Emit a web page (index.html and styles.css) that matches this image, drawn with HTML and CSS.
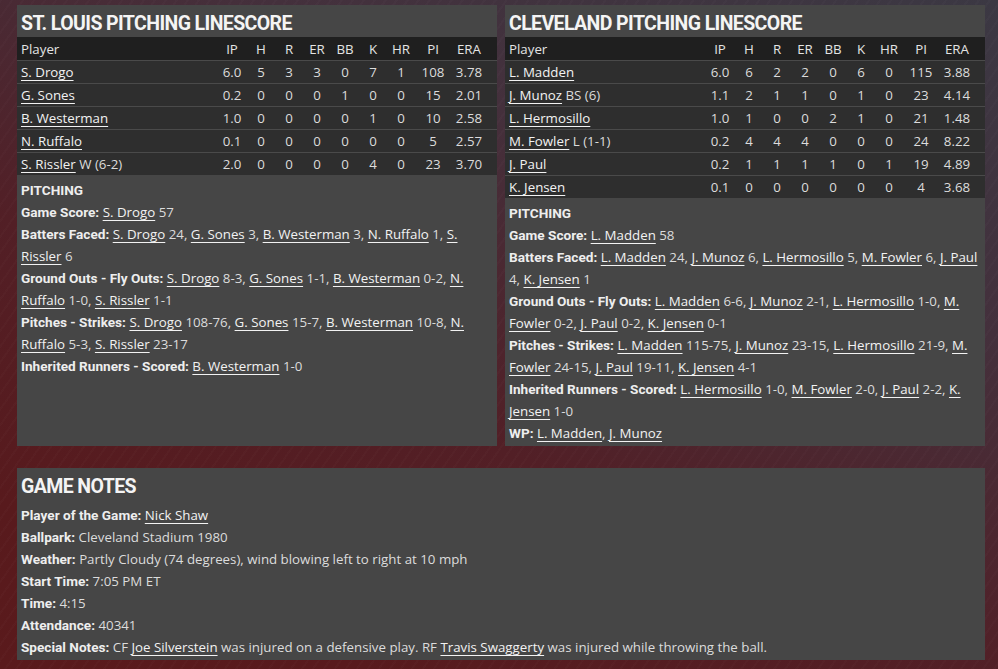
FILE: index.html
```html
<!DOCTYPE html>
<html>
<head>
<meta charset="utf-8">
<link rel="stylesheet" href="styles.css">
</head>
<body>
<div class="page">
  <div class="grid">
    <section class="panel">
      <h2 class="title">ST. LOUIS PITCHING LINESCORE</h2>
      <table class="line">
        <colgroup><col class="c-player"><col class="c-ip"><col class="c-n"><col class="c-n"><col class="c-n"><col class="c-n"><col class="c-n"><col class="c-n"><col class="c-pi"><col class="c-era"></colgroup>
        <thead><tr><th class="pl">Player</th><th>IP</th><th>H</th><th>R</th><th>ER</th><th>BB</th><th>K</th><th>HR</th><th>PI</th><th class="era">ERA</th></tr></thead>
        <tbody>
          <tr><td class="pl"><a>S. Drogo</a></td><td>6.0</td><td>5</td><td>3</td><td>3</td><td>0</td><td>7</td><td>1</td><td>108</td><td class="era">3.78</td></tr>
          <tr><td class="pl"><a>G. Sones</a></td><td>0.2</td><td>0</td><td>0</td><td>0</td><td>1</td><td>0</td><td>0</td><td>15</td><td class="era">2.01</td></tr>
          <tr><td class="pl"><a>B. Westerman</a></td><td>1.0</td><td>0</td><td>0</td><td>0</td><td>0</td><td>1</td><td>0</td><td>10</td><td class="era">2.58</td></tr>
          <tr><td class="pl"><a>N. Ruffalo</a></td><td>0.1</td><td>0</td><td>0</td><td>0</td><td>0</td><td>0</td><td>0</td><td>5</td><td class="era">2.57</td></tr>
          <tr><td class="pl"><a>S. Rissler</a> W (6-2)</td><td>2.0</td><td>0</td><td>0</td><td>0</td><td>0</td><td>4</td><td>0</td><td>23</td><td class="era">3.70</td></tr>
        </tbody>
      </table>
      <div class="notes">
        <div class="sub">PITCHING</div>
        <p><b>Game Score:</b> <a>S. Drogo</a> 57</p>
        <p><b>Batters Faced:</b> <a>S. Drogo</a> 24, <a>G. Sones</a> 3, <a>B. Westerman</a> 3, <a>N. Ruffalo</a> 1, <a>S. Rissler</a> 6</p>
        <p><b>Ground Outs - Fly Outs:</b> <a>S. Drogo</a> 8-3, <a>G. Sones</a> 1-1, <a>B. Westerman</a> 0-2, <a>N. Ruffalo</a> 1-0, <a>S. Rissler</a> 1-1</p>
        <p><b>Pitches - Strikes:</b> <a>S. Drogo</a> 108-76, <a>G. Sones</a> 15-7, <a>B. Westerman</a> 10-8, <a>N. Ruffalo</a> 5-3, <a>S. Rissler</a> 23-17</p>
        <p><b>Inherited Runners - Scored:</b> <a>B. Westerman</a> 1-0</p>
      </div>
    </section>
    <section class="panel">
      <h2 class="title">CLEVELAND PITCHING LINESCORE</h2>
      <table class="line">
        <colgroup><col class="c-player"><col class="c-ip"><col class="c-n"><col class="c-n"><col class="c-n"><col class="c-n"><col class="c-n"><col class="c-n"><col class="c-pi"><col class="c-era"></colgroup>
        <thead><tr><th class="pl">Player</th><th>IP</th><th>H</th><th>R</th><th>ER</th><th>BB</th><th>K</th><th>HR</th><th>PI</th><th class="era">ERA</th></tr></thead>
        <tbody>
          <tr><td class="pl"><a>L. Madden</a></td><td>6.0</td><td>6</td><td>2</td><td>2</td><td>0</td><td>6</td><td>0</td><td>115</td><td class="era">3.88</td></tr>
          <tr><td class="pl"><a>J. Munoz</a> BS (6)</td><td>1.1</td><td>2</td><td>1</td><td>1</td><td>0</td><td>1</td><td>0</td><td>23</td><td class="era">4.14</td></tr>
          <tr><td class="pl"><a>L. Hermosillo</a></td><td>1.0</td><td>1</td><td>0</td><td>0</td><td>2</td><td>1</td><td>0</td><td>21</td><td class="era">1.48</td></tr>
          <tr><td class="pl"><a>M. Fowler</a> L (1-1)</td><td>0.2</td><td>4</td><td>4</td><td>4</td><td>0</td><td>0</td><td>0</td><td>24</td><td class="era">8.22</td></tr>
          <tr><td class="pl"><a>J. Paul</a></td><td>0.2</td><td>1</td><td>1</td><td>1</td><td>1</td><td>0</td><td>1</td><td>19</td><td class="era">4.89</td></tr>
          <tr><td class="pl"><a>K. Jensen</a></td><td>0.1</td><td>0</td><td>0</td><td>0</td><td>0</td><td>0</td><td>0</td><td>4</td><td class="era">3.68</td></tr>
        </tbody>
      </table>
      <div class="notes">
        <div class="sub">PITCHING</div>
        <p><b>Game Score:</b> <a>L. Madden</a> 58</p>
        <p><b>Batters Faced:</b> <a>L. Madden</a> 24, <a>J. Munoz</a> 6, <a>L. Hermosillo</a> 5, <a>M. Fowler</a> 6, <a>J. Paul</a> 4, <a>K. Jensen</a> 1</p>
        <p><b>Ground Outs - Fly Outs:</b> <a>L. Madden</a> 6-6, <a>J. Munoz</a> 2-1, <a>L. Hermosillo</a> 1-0, <a>M. Fowler</a> 0-2, <a>J. Paul</a> 0-2, <a>K. Jensen</a> 0-1</p>
        <p><b>Pitches - Strikes:</b> <a>L. Madden</a> 115-75, <a>J. Munoz</a> 23-15, <a>L. Hermosillo</a> 21-9, <a>M. Fowler</a> 24-15, <a>J. Paul</a> 19-11, <a>K. Jensen</a> 4-1</p>
        <p><b>Inherited Runners - Scored:</b> <a>L. Hermosillo</a> 1-0, <a>M. Fowler</a> 2-0, <a>J. Paul</a> 2-2, <a>K. Jensen</a> 1-0</p>
        <p><b>WP:</b> <a>L. Madden</a>, <a>J. Munoz</a></p>
      </div>
    </section>
  </div>
  <section class="panel gamenotes">
    <h2 class="title big">GAME NOTES</h2>
    <div class="notes">
      <p><b>Player of the Game:</b> <a>Nick Shaw</a></p>
      <p><b>Ballpark:</b> Cleveland Stadium 1980</p>
      <p><b>Weather:</b> Partly Cloudy (74 degrees), wind blowing left to right at 10 mph</p>
      <p><b>Start Time:</b> 7:05 PM ET</p>
      <p><b>Time:</b> 4:15</p>
      <p><b>Attendance:</b> 40341</p>
      <p><b>Special Notes:</b> CF <a>Joe Silverstein</a> was injured on a defensive play. RF <a>Travis Swaggerty</a> was injured while throwing the ball.</p>
    </div>
  </section>
</div>
</body>
</html>
```

FILE: styles.css
```css
html, body {
  margin: 0;
  height: 100%;
}
body {
  font-family: "Open Sans", "Noto Sans", sans-serif;
  font-size: 13.3px;
  color: #dcdcdc;
  background:
    repeating-linear-gradient(125deg, rgba(255,255,255,0.015) 0 2px, rgba(0,0,0,0) 2px 9px),
    linear-gradient(205deg, #3b3843 0%, #44303c 30%, #521f26 60%, #581a1d 85%, #5a1a1c 100%);
  overflow: hidden;
}
.page {
  padding: 5px 13px 0 17px;
}
.grid {
  display: grid;
  grid-template-columns: 480px 480px;
  column-gap: 8px;
}
.panel {
  background: #464646;
  display: flex;
  flex-direction: column;
}
.title {
  margin: 0;
  padding: 6px 4px 0 4px;
  height: 26px;
  font-family: "Roboto", "Open Sans", sans-serif;
  font-size: 19.5px;
  letter-spacing: -0.6px;
  line-height: 26px;
  font-weight: 700;
  color: #f4f4f4;
}
.line {
  width: 480px;
  border-collapse: collapse;
  table-layout: fixed;
}
.c-player { width: 200px; }
.c-ip { width: 30px; }
.c-n { width: 28px; }
.c-pi { width: 36px; }
.c-era { width: 46px; }
.line th, .line td {
  height: 22px;
  padding: 0;
  text-align: center;
  white-space: nowrap;
  font-weight: 400;
}
.line thead th {
  background: #1f1f1f;
  color: #e4e4e4;
  height: 23px;
}
.line tbody td {
  background: #2e2e2e;
  border-top: 1px solid #4a4a4a;
}
.line .pl {
  text-align: left;
  padding-left: 4px;
}
.line .era {
  padding-right: 10px;
}
a {
  color: #f2f2f2;
  text-decoration: underline;
  text-underline-offset: 3px;
}
.notes {
  padding: 4px 4px 2px 4px;
}
.notes p, .sub {
  margin: 0;
  line-height: 22px;
}
.sub, .notes b {
  font-family: "Roboto", "Open Sans", sans-serif;
  font-size: 13.6px;
  font-weight: 700;
  color: #eeeeee;
}
.gamenotes {
  margin-top: 22px;
}
.title.big {
  padding-top: 3px;
  height: 33px;
  line-height: 31px;
}
.gamenotes .notes {
  padding-top: 0;
}
```
